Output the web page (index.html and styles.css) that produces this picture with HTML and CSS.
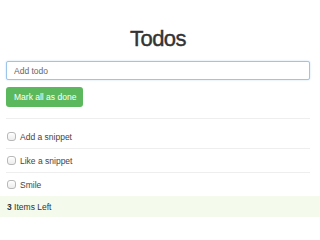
FILE: index.html
```html
<!DOCTYPE html>
<html lang="en">
<head>
    <meta charset="UTF-8">
    <title>Todos</title>
    <link rel="stylesheet" href="styles.css">
</head>
<body>

    <div class="container">
        <h1>Todos</h1>

        <div class="new-todo">
            <input type="text" class="todo-input" placeholder="Add todo">
            <button class="mark-all">Mark all as done</button>
        </div>

        <ul class="todo-list">
            <li><input type="checkbox"><span>Add a snippet</span></li>
            <li><input type="checkbox"><span>Like a snippet</span></li>
            <li><input type="checkbox"><span>Smile</span></li>
        </ul>
    </div>

    <div class="footer"><strong>3</strong> Items Left</div>

</body>
</html>
```

FILE: styles.css
```css
body {
    margin: 0;
    padding: 0;
    font-family: "Liberation Sans", Arial, sans-serif;
    font-size: 8.5px;
    color: #333;
    background: #fff;
}

.container {
    padding: 0 10px 0 6px;
}

h1 {
    margin: 26px 0 9px;
    font-size: 22px;
    line-height: 26px;
    font-weight: normal;
    letter-spacing: -0.5px;
    text-align: center;
    color: #333;
    -webkit-text-stroke: 0.4px #333;
}

.new-todo {
    padding-bottom: 11px;
    border-bottom: 1px solid #eee;
}

.todo-input {
    display: block;
    box-sizing: border-box;
    width: 100%;
    height: 19px;
    margin: 0;
    padding: 0 7px;
    border: 1px solid #9cc5ec;
    border-radius: 2px;
    box-shadow: 0 0 2px rgba(102, 175, 233, 0.4);
    font-family: inherit;
    font-size: 8.5px;
    color: #333;
    outline: none;
}

.todo-input::placeholder {
    color: #666;
}

.mark-all {
    display: block;
    height: 20px;
    margin-top: 7px;
    padding: 0 7px 0 8px;
    border: none;
    border-radius: 3px;
    background: #5cb85c;
    color: #fff;
    font-family: inherit;
    font-size: 8.5px;
    cursor: pointer;
}

.todo-list {
    list-style: none;
    margin: 0;
    padding: 6px 0 0;
}

.todo-list li {
    display: flex;
    align-items: center;
    height: 23px;
    border-bottom: 1px solid #eee;
    color: #444;
}

.todo-list input[type="checkbox"] {
    -webkit-appearance: none;
    appearance: none;
    box-sizing: border-box;
    width: 9px;
    height: 9px;
    margin: 0 4px 0 1px;
    border: 1px solid #b8b8b8;
    border-radius: 3px;
    background: linear-gradient(#fff, #ececec);
}

.todo-list li:last-child {
    border-bottom: none;
}

.footer {
    height: 21px;
    line-height: 22px;
    padding: 0 7px;
    background: #f4fbec;
    color: #333;
}
```
